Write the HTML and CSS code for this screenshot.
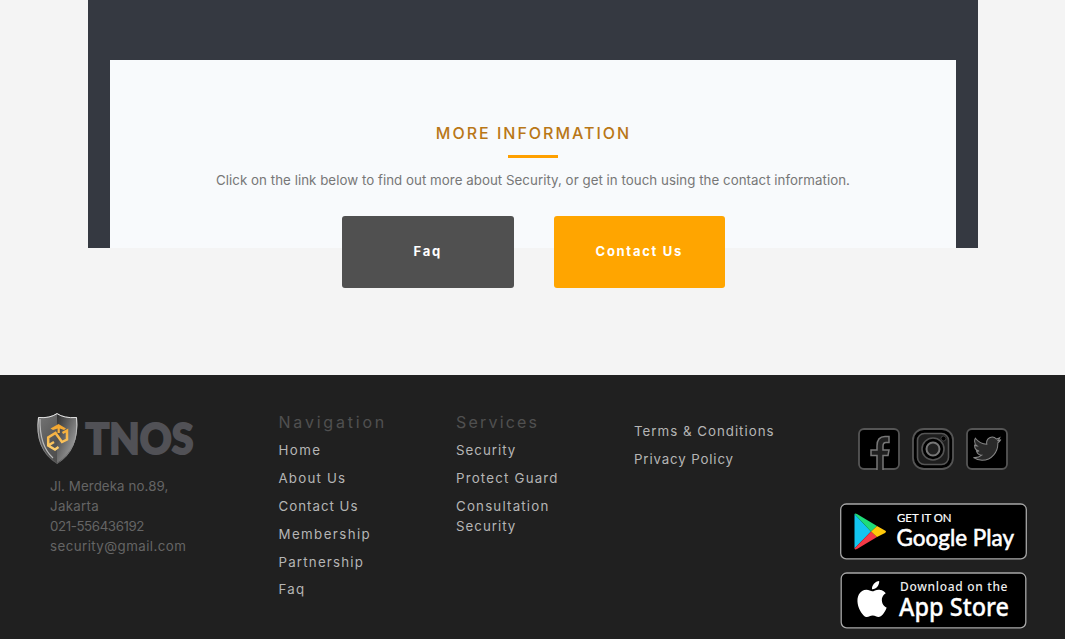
FILE: index.html
```html
<!DOCTYPE html>
<html lang="en">
<head>
<meta charset="utf-8">
<title>TNOS Security</title>
<link rel="stylesheet" href="styles.css">
</head>
<body>
<main class="main">
  <div class="band">
    <section class="card">
      <h2 class="title">MORE INFORMATION</h2>
      <div class="rule"></div>
      <p class="lead">Click on the link below to find out more about Security, or get in touch using the contact information.</p>
      <div class="actions">
        <a class="btn btn-faq">Faq</a>
        <a class="btn btn-contact">Contact Us</a>
      </div>
    </section>
  </div>
</main>
<footer class="footer">
  <div class="brand">
    <svg class="logo" width="160" height="54" viewBox="36 411 160 54">
      <defs>
        <linearGradient id="sh" x1="0" y1="0" x2="1" y2="1"><stop offset="0" stop-color="#777"/><stop offset=".5" stop-color="#555"/><stop offset="1" stop-color="#444"/></linearGradient>
        <linearGradient id="sr" x1="0" y1="0" x2="1" y2="1"><stop offset="0" stop-color="#2c2c2c"/><stop offset="1" stop-color="#bbb"/></linearGradient>
        <linearGradient id="rim" x1="0" y1="0" x2="0" y2="1"><stop offset="0" stop-color="#eee"/><stop offset="1" stop-color="#555"/></linearGradient>
        <linearGradient id="gold" gradientUnits="userSpaceOnUse" x1="0" y1="424" x2="0" y2="453"><stop offset="0" stop-color="#f2a32a"/><stop offset="1" stop-color="#ffd477"/></linearGradient>
      </defs>
      <path d="M38 417Q50 418 57 413Q64 418 77 417Q80 450 57 464Q34 450 38 417Z" fill="url(#sh)"/>
      <path d="M57 413Q64 418 77 417Q80 450 57 464Z" fill="url(#sr)"/>
      <path d="M38.500 417.500Q50 418.500 57 413.600Q64 418.500 76.500 417.500Q79.500 449 57 463.300Q34.500 449 38.500 417.500Z" fill="none" stroke="url(#rim)" stroke-width="1"/>
      <path d="M40 419Q39.500 446 53 458" fill="none" stroke="#bbb" stroke-width="1.200"/>
      <path d="M50.500 428.500L58.500 424L66 428.500L64 430L59.800 428.500V433H57.500V428.500L53 430Z" fill="url(#gold)"/>
      <path d="M58.500 447L55 449.500L48.200 445.500V437.500L55.500 433L62 442L67 439.500V430.500L62.500 433M48.200 445.500L54 442" fill="none" stroke="url(#gold)" stroke-width="2.500"/>
      <text class="wordmark" x="85.500" y="454" textLength="108" lengthAdjust="spacingAndGlyphs">TNOS</text>
    </svg>
    <address class="address"><span class="a1">Jl. Merdeka no.89,</span><span class="a2">Jakarta</span><span class="a3">021-556436192</span><span class="a4">security@gmail.com</span></address>
  </div>
  <nav class="col col-nav">
    <h3>Navigation</h3>
    <a class="wide">Home</a><a>About Us</a><a class="snug">Contact Us</a><a class="wide">Membership</a><a>Partnership</a><a>Faq</a>
  </nav>
  <nav class="col col-services">
    <h3 class="h-services">Services</h3>
    <a class="snug">Security</a><a>Protect Guard</a><a>Consultation<br><span class="snug">Security</span></a>
  </nav>
  <nav class="col col-legal">
    <a class="snug">Terms &amp; Conditions</a><a class="tight">Privacy Policy</a>
  </nav>
  <div class="apps">
    <div class="social">
      <svg width="42" height="42" viewBox="0 0 42 42">
        <rect x="1" y="1" width="40" height="40" rx="5" fill="#000" stroke="#555" stroke-width="1.800"/>
        <path d="M19 42V27.500H13V22H19V18Q19 8.500 27 8.500H31V14.500H28Q25 14.500 25 18V22H31L30 27.500H25V42" fill="#202020" stroke="#777" stroke-width="1.500"/>
      </svg>
      <svg width="42" height="42" viewBox="0 0 42 42">
        <rect x="1" y="1" width="40" height="40" rx="11" fill="#000" stroke="#555" stroke-width="1.800"/>
        <rect x="5.500" y="5.500" width="31" height="31" rx="7" fill="#1e1e1e" stroke="#555" stroke-width="1.600"/>
        <circle cx="21" cy="21" r="11" fill="#000" stroke="#555" stroke-width="1.600"/>
        <circle cx="21" cy="21" r="6.500" fill="#202020" stroke="#777" stroke-width="2"/>
        <circle cx="31.500" cy="10.500" r="2.500" fill="#000" stroke="#555" stroke-width=".700"/>
      </svg>
      <svg width="42" height="42" viewBox="0 0 42 42">
        <rect x="1" y="1" width="40" height="40" rx="5" fill="#000" stroke="#555" stroke-width="1.800"/>
        <path transform="translate(7.500 6.500) scale(1.130 1.180)" d="M23.950 4.570a10 10 0 0 1-2.820.770 4.960 4.960 0 0 0 2.160-2.720c-.950.550-2 .960-3.130 1.180a4.920 4.920 0 0 0-8.380 4.480C7.690 8.090 4.070 6.130 1.640 3.160a4.820 4.820 0 0 0-.670 2.480c0 1.710.870 3.210 2.190 4.100a4.900 4.900 0 0 1-2.230-.620v.060a4.920 4.920 0 0 0 3.950 4.830 5 5 0 0 1-2.210.080 4.940 4.940 0 0 0 4.600 3.420A9.870 9.870 0 0 1 0 19.540a14 14 0 0 0 7.550 2.210c9.050 0 14-7.500 14-13.980 0-.210 0-.420-.020-.630a9.940 9.940 0 0 0 2.460-2.550z" fill="#2a2a2a" stroke="#888" stroke-width=".900"/>
      </svg>
    </div>
    <svg class="badge" width="188" height="57" viewBox="840 503.500 188 57">
      <rect x="840.700" y="504.500" width="185.600" height="54.800" rx="5.500" fill="#000" stroke="#a6a6a6" stroke-width="1.300"/>
      <path d="M854.500 514.500V549L871 532Z" fill="#13c5f0"/>
      <path d="M854.500 514.500Q855 513.500 857 514.500L877 526.500L871 532Z" fill="#1fdc79"/>
      <path d="M854.500 549Q855 550.500 857 549.500L877 537.500L871 532Z" fill="#f43a47"/>
      <path d="M877 526.500L885 531Q887 532 885 533.500L877 537.500L871 532Z" fill="#ffc80a"/>
      <text class="b-small" x="897" y="522.300" textLength="54.500" lengthAdjust="spacingAndGlyphs">GET IT ON</text>
      <text class="b-google" x="896.500" y="546.300" textLength="117.500" lengthAdjust="spacingAndGlyphs">Google Play</text>
    </svg>
    <svg class="badge" width="188" height="57" viewBox="840 572 188 57">
      <rect x="841.200" y="573" width="184.600" height="54.800" rx="5.500" fill="#000" stroke="#a6a6a6" stroke-width="1.300"/>
      <path transform="translate(850.500 577.400) scale(1.800)" d="M18.700 19.500c-.830 1.240-1.710 2.450-3.050 2.470-1.340.030-1.770-.790-3.290-.790s-2 .770-3.270.820c-1.310.050-2.300-1.320-3.140-2.530C4.250 17 2.940 12.450 4.700 9.390c.870-1.520 2.430-2.480 4.120-2.510 1.280-.020 2.500.870 3.290.870.780 0 2.260-1.070 3.810-.910.650.030 2.470.260 3.640 1.980-.090.060-2.170 1.280-2.150 3.810.030 3.020 2.650 4.030 2.680 4.040-.030.070-.420 1.440-1.380 2.830M13 3.500c.730-.830 1.940-1.460 2.940-1.500.130 1.170-.340 2.350-1.040 3.190-.690.850-1.830 1.510-2.950 1.420-.150-1.150.410-2.350 1.050-3.110z" fill="#fff"/>
      <text class="b-dl" x="900" y="591" textLength="107.500">Download on the</text>
      <text class="b-app" x="899" y="616" textLength="110" lengthAdjust="spacingAndGlyphs">App Store</text>
    </svg>
  </div>
</footer>
</body>
</html>
```
FILE: styles.css
```css
* { box-sizing: border-box; }
body { margin: 0; width: 1065px; height: 639px; overflow: hidden; background: #f4f4f4; font-family: Inter, sans-serif; }
.main { height: 375px; padding: 0 87px 0 88px; }
.band { height: 248px; padding: 60px 22px 0; background: #353941; }
.card { height: 188px; padding-top: 62px; background: #f8fafc; display: flex; flex-direction: column; align-items: center; }
.title { margin: 0; font-size: 16px; line-height: 22px; font-weight: 500; letter-spacing: 2px; color: #b97717; white-space: nowrap; padding-left: 1px; }
.rule { width: 50px; height: 3px; flex: none; margin-top: 11px; background: #ffa000; }
.lead { margin: 12px 0 0; font-size: 13.300px; line-height: 20px; color: #777; white-space: nowrap; letter-spacing: 0.040px; }
.actions { display: flex; gap: 40px; margin: 26px 0 0 1px; }
.btn { width: 171.500px; height: 71.500px; border-radius: 3px; padding-bottom: 2px; display: flex; align-items: center; justify-content: center; color: #fff; font-size: 13px; font-weight: 700; letter-spacing: 1.700px; }
.btn-faq { background: #505050; }
.btn-contact { background: #ffa500; }
.footer { height: 264px; background: #202020; display: flex; align-items: flex-start; }
.brand { width: 278.500px; padding: 36px 0 0 36px; }
.logo { display: block; overflow: visible; }
.wordmark { font: 900 42px Lato, sans-serif; fill: #515156; stroke: #515156; stroke-width: 2px; }
.address { margin: 11px 0 0 14px; display: flex; flex-direction: column; align-items: flex-start; font-style: normal; font-size: 13.300px; line-height: 20px; color: #656565; }
.a1 { letter-spacing: .1px; }
.a2 { letter-spacing: .3px; }
.a3 { letter-spacing: -.4px; }
.a4 { letter-spacing: .44px; }
.col { display: flex; flex-direction: column; align-items: flex-start; padding-top: 35px; white-space: nowrap; }
.col h3 { margin: 0 0 6px; font-size: 16px; line-height: 24px; font-weight: 400; letter-spacing: 2.800px; color: #505050; }
.col .h-services { letter-spacing: 2.200px; }
.col a { margin-bottom: 7.900px; font-size: 13.300px; line-height: 20px; letter-spacing: 1.200px; color: #b5b5b5; }
.col .wide { letter-spacing: 1.400px; }
.col .snug { letter-spacing: 1px; }
.col .tight { letter-spacing: .850px; }
.col-nav { width: 177.500px; }
.col-services { width: 178px; }
.col-legal { width: 206px; padding-top: 46px; }
.apps { width: 188px; padding-top: 53px; }
.social { display: flex; gap: 12px; padding-left: 18px; margin-bottom: 33px; }
.badge { display: block; margin-bottom: 12px; }
.b-small { font: 400 11.500px Lato, sans-serif; fill: #fff; stroke: #fff; stroke-width: .2px; }
.b-google { font: 400 24px Lato, sans-serif; fill: #fff; stroke: #fff; stroke-width: .6px; }
.b-dl { font: 500 12px "Noto Sans", sans-serif; fill: #eee; }
.b-app { font: 500 25px "Noto Sans", sans-serif; fill: #fff; stroke: #fff; stroke-width: .3px; }
```
